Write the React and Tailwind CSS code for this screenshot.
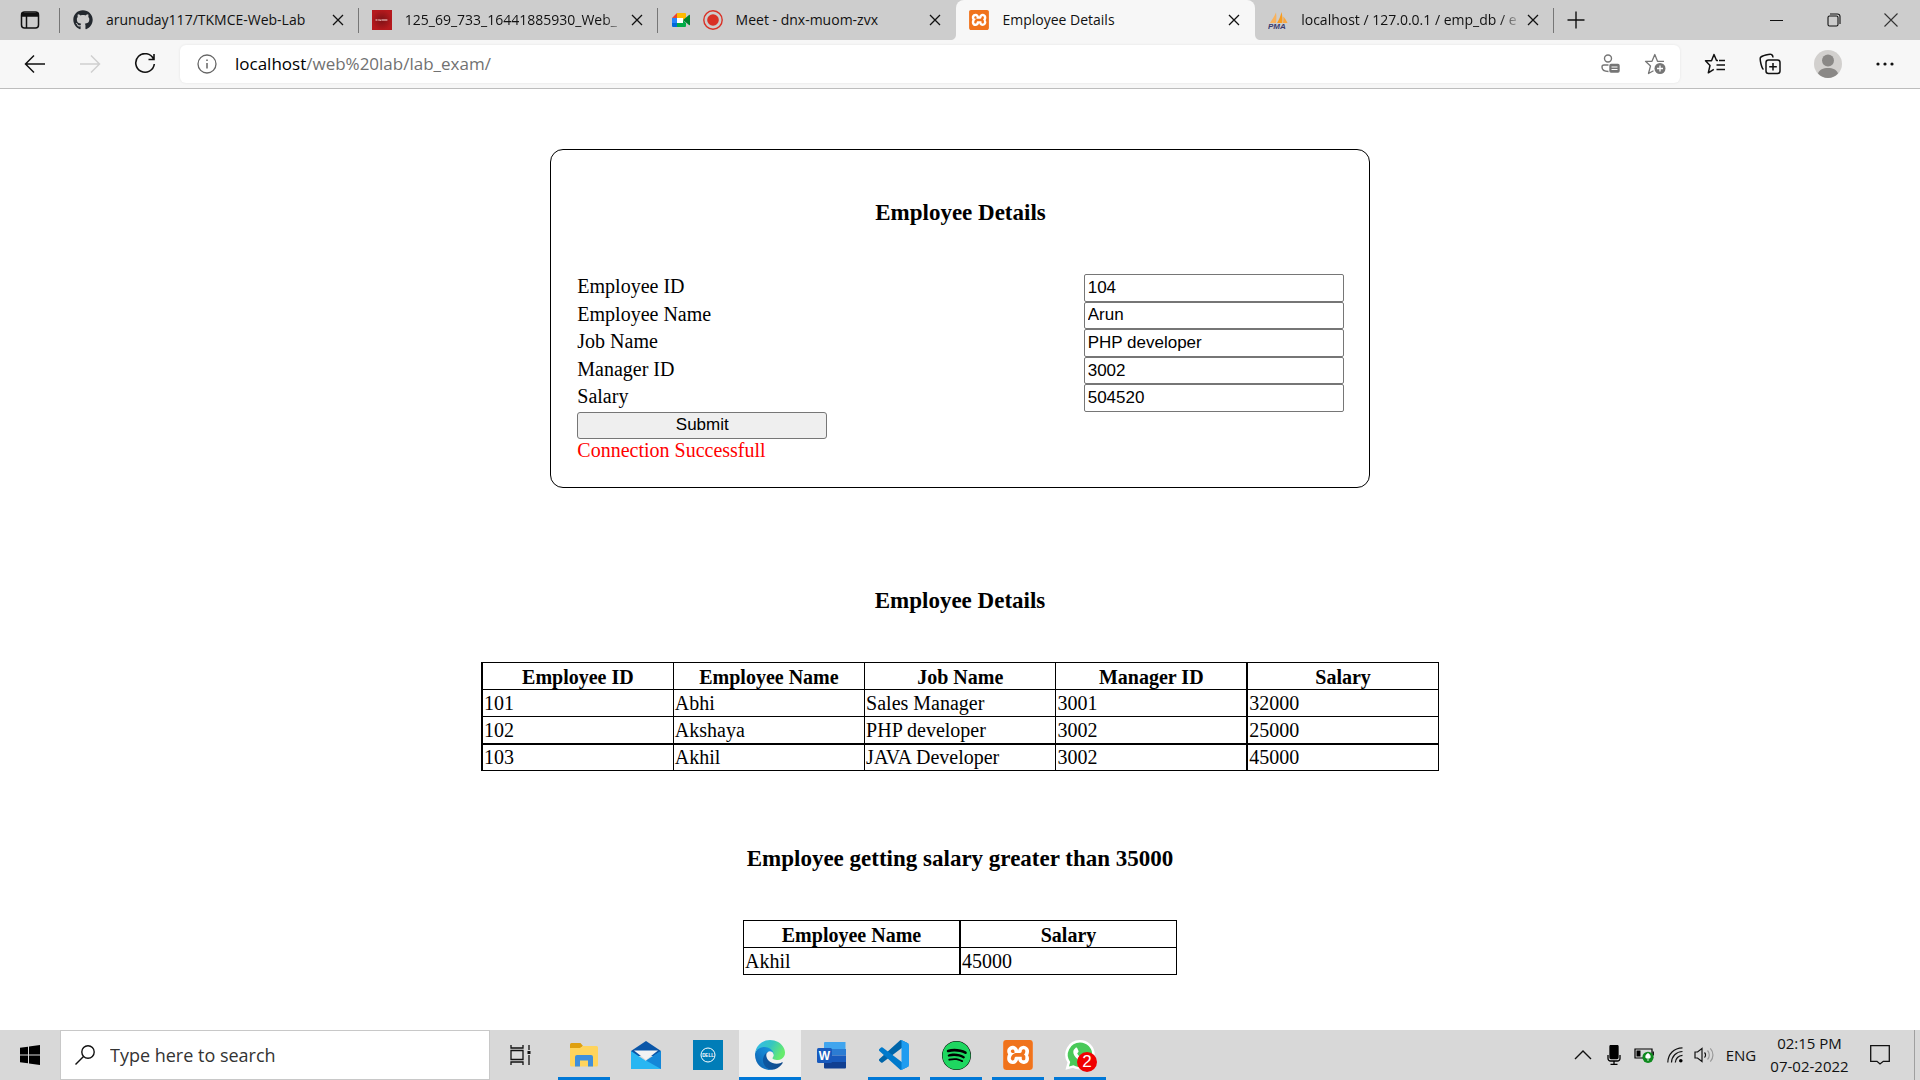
import React from "react";
import { FaGithub, FaSpotify } from "react-icons/fa";
import { SiXampp } from "react-icons/si";

const UI = "font-['Open_Sans',sans-serif]";

function XamppIcon({ className }) {
  return (
    <span className={"relative block shrink-0 rounded-[4px] bg-white " + className}>
      <SiXampp className="block size-full text-[#f0731c]" />
    </span>
  );
}

function MeetIcon() {
  return (
    <svg viewBox="0 0 20 20" className="size-5 shrink-0">
      <path d="M6 3v5H1z" fill="#ea4335" />
      <path d="M6 3h8a1 1 0 0 1 1 1v4l-3 2V8H6z" fill="#ffba00" />
      <path d="M1 8h5v5H1z" fill="#2684fc" />
      <path d="M1 13h5v4H2a1 1 0 0 1-1-1z" fill="#0066da" />
      <path d="M6 13h6v-3l3 3v3a1 1 0 0 1-1 1H6z" fill="#00ac47" />
      <path d="M6 8h6v5H6z" fill="#fff" />
      <path d="M12 10l6-5c.5-.4 1-.2 1 .5v9c0 .7-.5.9-1 .5z" fill="#00832d" />
    </svg>
  );
}

function RecordIcon() {
  return (
    <svg viewBox="0 0 20 20" className="size-5 shrink-0">
      <circle cx="10" cy="10" r="9.2" fill="none" stroke="#d93025" strokeWidth="1.4" />
      <circle cx="10" cy="10" r="5.8" fill="#d93025" />
    </svg>
  );
}

function PmaIcon() {
  return (
    <svg viewBox="0 0 20 20" className="size-5 shrink-0">
      <path d="M2 13C4 10 6.500 6 8 2.500c.6 3.500.5 7.500 0 10.500z" fill="#f9b25c" />
      <path d="M9 13c2-3 3.500-7 4.500-11 1 4 1.200 7.500.8 11z" fill="#f89c1e" />
      <path d="M15 13c.3-2 .5-4 .3-6.500 1.700 2 3.200 4 4.200 6.500z" fill="#f9a63e" />
      <text x="0" y="19" fontFamily="Liberation Sans" fontSize="8" fontWeight="700" fontStyle="italic" fill="#3b3b6d">PMA</text>
    </svg>
  );
}

function RedIcon() {
  return (
    <svg viewBox="0 0 20 20" className="size-5 shrink-0">
      <defs>
        <radialGradient id="redGlow"><stop offset="0" stopColor="#7d1216" /><stop offset="1" stopColor="#b5191d" /></radialGradient>
      </defs>
      <rect width="20" height="20" fill="url(#redGlow)" />
      <path d="M3.500 10h2m.7 0h1.500m.7-.500v1.500m1-1h6" stroke="#d99a9a" strokeWidth="1.300" />
    </svg>
  );
}

function CloseIcon() {
  return (
    <svg viewBox="0 0 12 12" className="size-3" fill="none" stroke="#111" strokeWidth="1.3">
      <path d="M1 1l10 10M11 1L1 11" />
    </svg>
  );
}

const tabs = [
  { title: "arunuday117/TKMCE-Web-Lab", icons: [<FaGithub key="g" className="size-5 shrink-0 text-[#24292f]" />] },
  { title: "125_69_733_16441885930_Web_", icons: [<RedIcon key="r" />], fade: true },
  { title: "Meet - dnx-muom-zvx", icons: [<MeetIcon key="m" />, <RecordIcon key="c" />] },
  { title: "Employee Details", icons: [<XamppIcon key="x" className="size-5" />], active: true },
  { title: "localhost / 127.0.0.1 / emp_db / e", icons: [<PmaIcon key="p" />], fade: true },
];

function Tab({ tab, divider }) {
  return (
    <div
      role="tab"
      aria-selected={!!tab.active}
      className={
        "relative flex h-10 min-w-0 flex-1 items-center gap-[13px] pl-[13px] pr-[15px] " +
        (tab.active ? "rounded-t-lg bg-[#f7f7f7]" : "")
      }
    >
      {divider && <span className="absolute right-0 top-2 h-[25px] w-px bg-[#767676]" />}
      {tab.active && (
        <>
          <svg viewBox="0 0 6 6" className="absolute -left-1.5 bottom-0 size-1.5"><path d="M6 0v6H0c4 0 6-2 6-6z" fill="#f7f7f7" /></svg>
          <svg viewBox="0 0 6 6" className="absolute -right-1.5 bottom-0 size-1.5"><path d="M0 0v6h6C2 6 0 4 0 0z" fill="#f7f7f7" /></svg>
        </>
      )}
      <span className="flex shrink-0 gap-3">{tab.icons}</span>
      <span
        className={
          "min-w-0 flex-1 overflow-hidden whitespace-nowrap text-[14px] leading-5 text-[#111] " +
          (tab.fade ? "-mr-2 [mask-image:linear-gradient(to_right,#000_90%,transparent)]" : "")
        }
      >
        {tab.title}
      </span>
      <button aria-label={"Close " + tab.title} className="shrink-0"><CloseIcon /></button>
    </div>
  );
}

function TabStrip() {
  return (
    <div className="flex h-10 items-center bg-[#cdcdcd]">
      <button aria-label="Tab actions" className="flex h-10 w-[60px] shrink-0 items-center justify-center">
        <svg viewBox="0 0 20 20" className="size-5" fill="none" stroke="#111" strokeWidth="1.5">
          <rect x="1.5" y="2" width="17" height="16" rx="3" />
          <path d="M2 3.5h16v2.5H2z" fill="#111" />
          <path d="M6.5 6v12" />
        </svg>
      </button>
      <span className="-ml-px h-[25px] w-px bg-[#767676]" />
      <div role="tablist" className="flex min-w-0 max-w-[1494px] flex-1">
        {tabs.map((t, i) => (
          <Tab key={t.title} tab={t} divider={i !== 2 && i !== 3} />
        ))}
      </div>
      <button aria-label="New tab" className="flex h-10 w-11 items-center justify-center">
        <svg viewBox="0 0 18 18" className="size-[18px]" fill="none" stroke="#111" strokeWidth="1.4"><path d="M9 .5v17M.5 9h17" /></svg>
      </button>
      <div className="ml-auto flex">
        <button aria-label="Minimize" className="flex h-10 w-[58px] items-center justify-center">
          <svg viewBox="0 0 14 14" className="size-3.5" stroke="#111" strokeWidth="1"><path d="M1 7.5h13" /></svg>
        </button>
        <button aria-label="Restore" className="flex h-10 w-[57px] items-center justify-center">
          <svg viewBox="0 0 14 14" className="size-3.5" fill="none" stroke="#111" strokeWidth="1.1">
            <rect x="1" y="3" width="10" height="10" rx="1.5" />
            <path d="M3 1h7.5A2.5 2.5 0 0 1 13 3.5V11" />
          </svg>
        </button>
        <button aria-label="Close window" className="flex h-10 w-[58px] items-center justify-center">
          <svg viewBox="0 0 14 14" className="size-3.5" fill="none" stroke="#333" strokeWidth="1.1"><path d="M.5 .5l13 13M13.5 .5l-13 13" /></svg>
        </button>
      </div>
    </div>
  );
}

function Toolbar() {
  return (
    <div className="flex h-[49px] items-center border-b border-[#bdbdbd] bg-[#f7f7f7]">
      <button aria-label="Back" className="ml-[7px] flex h-10 w-[55px] items-center justify-center">
        <svg viewBox="0 0 22 22" className="size-[22px]" fill="none" stroke="#111" strokeWidth="1.5"><path d="M21 11H2M10 2.500L1.500 11l8.500 8.500" /></svg>
      </button>
      <button aria-label="Forward" className="flex h-10 w-[55px] items-center justify-center">
        <svg viewBox="0 0 22 22" className="size-[22px]" fill="none" stroke="#cfcfcf" strokeWidth="1.5"><path d="M1 11h19M12 2.500l8.500 8.500-8.500 8.500" /></svg>
      </button>
      <button aria-label="Refresh" className="flex h-10 w-[55px] items-center justify-center">
        <svg viewBox="0 0 22 22" className="size-[22px]" fill="none" stroke="#111" strokeWidth="1.6">
          <path d="M19.500 6A9.300 9.300 0 1 0 20.300 11M20 1v5.500h-5.500" />
        </svg>
      </button>
      <div className="ml-2 flex h-[38px] min-w-0 flex-1 items-center rounded-md bg-white pl-[17px] pr-3.5 shadow-[0_0_3px_rgba(0,0,0,0.08)]">
        <svg viewBox="0 0 20 20" className="size-5 shrink-0" fill="none" stroke="#666" strokeWidth="1.3">
          <circle cx="10" cy="10" r="9" />
          <path d="M10 9v5.500M10 5.500v1.600" strokeWidth="1.5" />
        </svg>
        <a href="#" className="ml-[18px] flex-1 whitespace-nowrap text-[17px] leading-6 text-[#717171]">
          <span className="text-black">localhost</span>/web%20lab/lab_exam/
        </a>
        <button aria-label="Sign-in info" className="mr-6">
          <svg viewBox="0 0 20 20" className="size-5" fill="none" stroke="#767676" strokeWidth="1.4">
            <circle cx="8" cy="4.500" r="3.500" />
            <path d="M8.500 11H4a2 2 0 0 0-2 2c0 3 2 4.500 6.500 4.500" />
            <rect x="10" y="10.500" width="9" height="7.500" rx="1" fill="#767676" />
            <path d="M11.500 13h6M11.500 15.500h6" stroke="#fff" strokeWidth="1" />
          </svg>
        </button>
        <button aria-label="Add to favorites">
          <svg viewBox="0 0 22 22" className="size-[22px]" fill="none" stroke="#767676" strokeWidth="1.3" strokeLinejoin="round">
            <path d="M20 8.300h-6.500L10.800 1.500 8 8.300H1.500l5 4.700-2 7.500 5-2.700" />
            <circle cx="16" cy="15.500" r="5.500" fill="#767676" stroke="none" />
            <path d="M16 12.500v6M13 15.500h6" stroke="#fff" />
          </svg>
        </button>
      </div>
      <div className="flex items-center">
        <button aria-label="Favorites" className="ml-[7px] flex w-[55px] justify-center">
          <svg viewBox="0 0 22 22" className="size-[22px]" fill="none" stroke="#111" strokeWidth="1.500" strokeLinejoin="round">
            <path d="M14 7.500h-1.500L10 1.500 7.500 7.800H1.500L6 12.500 4.300 19.800l5.500-3.500" />
            <path d="M15 7.500h6M12.500 12H21M12.500 16.500H21" />
          </svg>
        </button>
        <button aria-label="Collections" className="flex w-[55px] justify-center">
          <svg viewBox="0 0 22 22" className="size-[22px]" fill="none" stroke="#111" strokeWidth="1.500">
            <rect x="7" y="7" width="14" height="13.500" rx="2.500" />
            <path d="M14 10v7.500M10.200 13.800h7.600M4.500 16.500C2.500 15 .500 6 1.500 4.500S11 .500 12.500 1.500c.8.500 1.500 2 1.500 3" />
          </svg>
        </button>
        <button aria-label="Profile" className="flex w-[58px] justify-center pl-1">
          <svg viewBox="0 0 28 28" className="size-7">
            <circle cx="14" cy="14" r="14" fill="#d2d0ce" />
            <circle cx="14" cy="10.500" r="6" fill="#8a8886" />
            <path d="M4 23.500C5.500 19.500 9 18 14 18s8.500 1.500 10 5.500A14 14 0 0 1 14 28 14 14 0 0 1 4 23.500z" fill="#8a8886" />
          </svg>
        </button>
        <button aria-label="Settings and more" className="mr-[7px] flex w-[58px] justify-center pl-0.5">
          <svg viewBox="0 0 18 4" className="h-1 w-[18px]" fill="#111"><circle cx="2" cy="2" r="1.600" /><circle cx="9" cy="2" r="1.600" /><circle cx="16" cy="2" r="1.600" /></svg>
        </button>
      </div>
    </div>
  );
}

const fields = [
  ["Employee ID", "104"],
  ["Employee Name", "Arun"],
  ["Job Name", "PHP developer"],
  ["Manager ID", "3002"],
  ["Salary", "504520"],
];

const employees = [
  ["101", "Abhi", "Sales Manager", "3001", "32000"],
  ["102", "Akshaya", "PHP developer", "3002", "25000"],
  ["103", "Akhil", "JAVA Developer", "3002", "45000"],
];

const heading = "mb-[47px] text-center text-[23px] font-bold leading-7";

function Page() {
  return (
    <main className="flex min-h-0 flex-1 flex-col items-center overflow-hidden bg-white px-0.5 font-['Liberation_Serif',serif] text-[20px] leading-[23px] text-black">
      <form onSubmit={(e) => e.preventDefault()} className="mt-[60px] box-content w-2/5 rounded-[13px] border border-black py-[25px] pl-[26px] pr-[25px]">
        <h3 className={heading + " mt-6"}>Employee Details</h3>
        <div className="grid h-[138px] grid-rows-5">
          {fields.map(([label, value]) => {
            const id = label.toLowerCase().replace(" ", "-");
            return (
              <div key={id} className="flex items-stretch justify-between">
                <label htmlFor={id} className="pt-px">{label}</label>
                <input
                  id={id}
                  defaultValue={value}
                  className="w-[260px] rounded-[2px] border border-[#767676] bg-white px-[3px] font-['Liberation_Sans',sans-serif] text-[17px] leading-5"
                />
              </div>
            );
          })}
        </div>
        <button className="block h-[27px] w-[250px] rounded-[3px] border border-[#767676] bg-[#efefef] pb-0.5 font-['Liberation_Sans',sans-serif] text-[17px] leading-5">
          Submit
        </button>
        <p className="text-[#ff0000]">Connection Successfull</p>
      </form>

      <h3 className={heading + " mt-[99px]"}>Employee Details</h3>
      <table className="h-[108px] w-1/2 table-fixed border-collapse leading-[22px]">
        <thead>
          <tr className="h-[27px]">
            {fields.map(([label], i) => (
              <th key={label} className={"border border-black p-px pt-0.5 " + (i === 0 || i === 4 ? "border-l-2" : "")}>{label}</th>
            ))}
          </tr>
        </thead>
        <tbody>
          {employees.map((row, r) => (
            <tr key={row[0]} className="h-[27px]">
              {row.map((cell, i) => (
                <td
                  key={i}
                  className={"border border-black p-px " + (i === 0 || i === 4 ? "border-l-2 " : "") + (r === 2 ? "border-t-2" : "")}
                >
                  {cell}
                </td>
              ))}
            </tr>
          ))}
        </tbody>
      </table>

      <h3 className={heading + " mt-[74px]"}>Employee getting salary greater than 35000</h3>
      <table className="h-[55px] w-[434px] table-fixed border-collapse leading-[22px]">
        <thead>
          <tr className="h-[27px]">
            <th className="border border-black p-px pt-0.5">Employee Name</th>
            <th className="border border-l-2 border-black p-px pt-0.5">Salary</th>
          </tr>
        </thead>
        <tbody>
          <tr className="h-[27px]">
            <td className="border border-black p-px">Akhil</td>
            <td className="border border-l-2 border-black p-px">45000</td>
          </tr>
        </tbody>
      </table>
    </main>
  );
}

function ExplorerIcon() {
  return (
    <svg viewBox="0 0 30 30" className="size-[30px]">
      <path d="M1 4.500a1.500 1.500 0 0 1 1.500-1.500h9L14 6l-2.500 2H1z" fill="#dfa010" />
      <path d="M1 8h10l3-2h13.500A1.500 1.500 0 0 1 29 7.500V25a1.500 1.500 0 0 1-1.500 1.500h-25A1.500 1.500 0 0 1 1 25z" fill="#ffd45c" />
      <path d="M6 26.500V17a2 2 0 0 1 2-2h14a2 2 0 0 1 2 2v9.500h-5V20.500h-8v6z" fill="#3f8fdb" />
    </svg>
  );
}

function MailIcon() {
  return (
    <svg viewBox="0 0 30 30" className="size-[30px]">
      <path d="M0 11L15 1l15 10v5H0z" fill="#0a56a8" />
      <path d="M0 11l15 10L30 11v18H0z" fill="#29b6f2" />
      <path d="M30 11v18L15 20.500z" fill="#1487d8" />
      <path d="M3 10.500h24L15 20z" fill="#f3f3f3" />
    </svg>
  );
}

function DellIcon() {
  return (
    <svg viewBox="0 0 30 30" className="size-[30px]">
      <rect width="30" height="30" fill="#007db8" />
      <circle cx="15" cy="15" r="7" fill="none" stroke="#fff" strokeWidth="1" />
      <text x="15" y="16.700" textAnchor="middle" fontFamily="Liberation Sans" fontSize="4.500" fontWeight="700" fill="#fff">DELL</text>
    </svg>
  );
}

function EdgeIcon() {
  return (
    <svg viewBox="0 0 256 256" className="size-[30px]">
      <defs>
        <linearGradient id="edgeA" x1="0" x2="1"><stop offset="0" stopColor="#0c59a4" /><stop offset="1" stopColor="#114a8b" /></linearGradient>
        <linearGradient id="edgeB" x1="1" y1="0" x2="0" y2="1"><stop offset="0" stopColor="#1b9de2" /><stop offset="0.500" stopColor="#1480ce" /><stop offset="1" stopColor="#0d5aa7" /></linearGradient>
        <linearGradient id="edgeC" x1="0" y1="0" x2="1" y2="0.400"><stop offset="0" stopColor="#35b9f1" /><stop offset="0.550" stopColor="#36c6c0" /><stop offset="1" stopColor="#66eb6e" /></linearGradient>
      </defs>
      <path d="M231 190.500c-3.400 1.800-6.900 3.400-10.500 4.700a101.900 101.900 0 0 1-35.900 6.500c-47.300 0-88.500-32.500-88.500-74.300a31.500 31.500 0 0 1 16.400-27.300c-42.800 1.800-53.800 46.400-53.800 72.500 0 73.900 68.100 81.400 82.800 81.400 7.900 0 19.800-2.300 27-4.600l1.300-.4a128.300 128.300 0 0 0 66.600-52.800 4 4 0 0 0-5.400-5.700z" fill="url(#edgeA)" />
      <path d="M105.700 241.400a79.200 79.200 0 0 1-22.700-21.300 80.700 80.700 0 0 1 29.500-120c3.200-1.500 8.500-4.100 15.600-4a32.400 32.400 0 0 1 25.700 13 31.900 31.900 0 0 1 6.300 18.700c0-.2 24.500-79.600-80-79.600-43.900 0-80 41.700-80 78.200a130.200 130.200 0 0 0 12.100 56 128 128 0 0 0 156.400 67 75.600 75.600 0 0 1-62.800-8z" fill="url(#edgeB)" />
      <path d="M152.300 148.900c-.9 1-3.400 2.500-3.400 5.600 0 2.600 1.700 5.200 4.800 7.300 14.300 10 41.400 8.600 41.500 8.600a59.600 59.600 0 0 0 30.300-8.300A61.400 61.400 0 0 0 256 109.200c.3-22.400-8-37.300-11.300-43.900C223.500 23.900 177.700 0 128 0A128 128 0 0 0 0 126.200c.5-36.500 36.800-66 80-66 3.500 0 23.500.3 42 10.100 16.300 8.500 24.900 18.900 30.800 29.200 6.200 10.700 7.300 24.100 7.300 29.500 0 5.300-2.700 13.300-7.800 19.900z" fill="url(#edgeC)" />
    </svg>
  );
}

function WordIcon() {
  return (
    <svg viewBox="0 0 30 30" className="size-[30px]">
      <path d="M8 2h20.500v7H7V3a1 1 0 0 1 1-1z" fill="#41a5ee" />
      <path d="M7 9h22v6.500H7z" fill="#2b7cd3" />
      <path d="M7 15.500h22V22H7z" fill="#185abd" />
      <path d="M7 22h22v5.500a1 1 0 0 1-1 1H8a1 1 0 0 1-1-1z" fill="#103f91" />
      <rect x="0" y="8" width="15" height="15" rx="1.500" fill="#185abd" />
      <text x="7.500" y="20" textAnchor="middle" fontFamily="Liberation Sans" fontSize="12" fontWeight="700" fill="#fff">W</text>
    </svg>
  );
}

function CodeIcon() {
  return (
    <svg viewBox="0 0 100 100" className="size-[30px]">
      <path d="M96.500 10.800L75.900.900a6.200 6.200 0 0 0-7.100 1.200L1.300 63.600a4.200 4.200 0 0 0 0 6.200l5.500 5a4.200 4.200 0 0 0 5.300.200L93.400 13.400c2.700-2.100 6.600-.1 6.600 3.300v-.2a6.200 6.200 0 0 0-3.500-5.700z" fill="#0065a9" />
      <path d="M96.500 89.200l-20.600 9.900a6.200 6.200 0 0 1-7.100-1.200L1.300 36.400a4.200 4.200 0 0 1 0-6.200l5.500-5a4.200 4.200 0 0 1 5.300-.200l81.300 61.600c2.700 2.100 6.600.1 6.600-3.300v.2a6.200 6.200 0 0 1-3.500 5.700z" fill="#007acc" />
      <path d="M75.900 99.100a6.200 6.200 0 0 1-7.100-1.200c2.300 2.300 6.200.700 6.200-2.600V4.700c0-3.300-3.900-4.900-6.200-2.600A6.200 6.200 0 0 1 75.900.900l20.600 9.900a6.200 6.200 0 0 1 3.500 5.600v67.200a6.200 6.200 0 0 1-3.500 5.600z" fill="#1f9cf0" />
    </svg>
  );
}

function SpotifyIcon() {
  return (
    <span className="block rounded-full bg-black p-px">
      <FaSpotify className="-m-px size-[29px] text-[#1ed760]" />
    </span>
  );
}

function WhatsAppIcon() {
  return (
    <span className="relative block">
      <svg viewBox="0 0 30 30" className="size-[30px]">
        <path d="M15 0a14.500 14.500 0 0 1 0 29.500c-2.500 0-5-.600-7-1.700L.500 29.700l2-7.300A14.600 14.600 0 0 1 15 0z" fill="#fff" />
        <path d="M15 2.500a12.200 12.200 0 0 1 0 24.500c-2.300 0-4.500-.600-6.400-1.800L4 26.400l1.200-4.500A12.200 12.200 0 0 1 15 2.500z" fill="#4ac959" />
        <path d="M10.500 8c.6-.6 1.500-.5 1.800.2l1.200 2.700c.2.500 0 1-1.300 2.500 1.200 2.200 2.800 3.600 5 4.500 1.300-1.700 1.700-2 2.300-1.700l2.700 1.300c.7.300.6 3-1.700 4-2 .8-5 .2-8.200-2.600-2.500-2.200-4-4.800-4-7 0-1.700.8-2.700 2.200-3.900z" fill="#fff" />
      </svg>
      <span className="absolute -bottom-0.5 -right-0.5 flex size-5 items-center justify-center rounded-full bg-[#f00000] font-['Liberation_Sans',sans-serif] text-[17px] leading-5 text-white">2</span>
    </span>
  );
}

const apps = [
  { name: "File Explorer", icon: <ExplorerIcon />, open: true },
  { name: "Mail", icon: <MailIcon /> },
  { name: "Dell", icon: <DellIcon /> },
  { name: "Microsoft Edge", icon: <EdgeIcon />, active: true },
  { name: "Word", icon: <WordIcon /> },
  { name: "Visual Studio Code", icon: <CodeIcon />, open: true },
  { name: "Spotify", icon: <SpotifyIcon />, open: true },
  { name: "XAMPP", icon: <XamppIcon className="size-[30px]" />, open: true },
  { name: "WhatsApp", icon: <WhatsAppIcon />, open: true },
];

function Taskbar() {
  return (
    <footer className="flex h-[50px] shrink-0 bg-[#d8d8d8]">
      <button aria-label="Start" className="flex w-[60px] items-center justify-center">
        <svg viewBox="0 0 20 20" className="size-5" fill="#000"><path d="M0 2.800l8-1.100v7.800H0zM9 1.500L20 0v9.500H9zM0 10.500h8v7.800l-8-1.100zM9 10.500h11V20L9 18.500z" /></svg>
      </button>
      <label className="flex w-[430px] items-center border border-[#c8c8c8] bg-white pl-3.5">
        <svg viewBox="0 0 20 20" className="size-5 shrink-0" fill="none" stroke="#111" strokeWidth="1.400"><circle cx="13" cy="7" r="6.200" /><path d="M8.500 11.500L.500 19.500" /></svg>
        <input aria-label="Search" placeholder="Type here to search" className="ml-[15px] min-w-0 flex-1 text-[18px] leading-6 outline-none placeholder:text-[#333]" />
      </label>
      <button aria-label="Task View" className="flex w-[61px] items-center justify-center">
        <svg viewBox="0 0 22 20" className="h-5 w-[22px]" fill="none" stroke="#111" strokeWidth="1.300">
          <path d="M1 0v3h12V0M1 20v-3h12v3M1 5.500h12v9H1zM19 0v5M19 10v10" />
          <path d="M17.500 6h3v3h-3z" fill="#111" stroke="none" />
        </svg>
      </button>
      <nav className="ml-0.5 flex">
        {apps.map((a) => (
          <button
            key={a.name}
            aria-label={a.name}
            className={"relative flex w-[62px] items-center justify-center " + (a.active ? "bg-[#f0f0f0]" : "")}
          >
            {a.icon}
            {a.open && <span className="absolute inset-x-[5px] bottom-0 h-[3px] bg-[#0078d7]" />}
            {a.active && <span className="absolute inset-x-0 bottom-0 h-[3px] bg-[#0078d7]" />}
          </button>
        ))}
      </nav>
      <div className="ml-auto flex items-center">
        <button aria-label="Show hidden icons" className="flex w-8 justify-center">
          <svg viewBox="0 0 18 10" className="h-2.5 w-[18px]" fill="none" stroke="#111" strokeWidth="1.400"><path d="M1 9l8-8 8 8" /></svg>
        </button>
        <button aria-label="Microphone" className="flex w-[29px] justify-center">
          <svg viewBox="0 0 14 20" className="h-5 w-3.5" fill="none" stroke="#000" strokeWidth="1.300"><rect x="3" y="0.500" width="8" height="13" rx="1" fill="#000" /><path d="M1 10v3.500a2.500 2.500 0 0 0 2.500 2.500h7a2.500 2.500 0 0 0 2.500-2.500V10M7 16v3M3.500 19.300h7" /></svg>
        </button>
        <button aria-label="Battery" className="flex w-8 justify-center">
          <svg viewBox="0 0 20 16" className="h-4 w-5" fill="none" stroke="#000" strokeWidth="1.200">
            <path d="M1 2h17v9H1z" /><path d="M2.500 3.500h4v6h-4z" fill="#000" stroke="none" /><path d="M19.300 4.500v4" />
            <circle cx="14" cy="10.300" r="5.600" fill="#0f8a1f" stroke="none" />
            <path d="M14 6.500c2 1 2.700 2.500 2 4.500h-4c-.7-2 0-3.500 2-4.500zM14 10v4" fill="#fff" stroke="#fff" strokeWidth="0.800" />
          </svg>
        </button>
        <button aria-label="Wi-Fi" className="flex w-[29px] justify-center">
          <svg viewBox="0 0 16 16" className="size-4" fill="none" stroke="#111" strokeWidth="1.200">
            <path d="M.800 15.500C1 7 7 1 15.500.800M4.500 15.500c.2-6.300 4.700-10.800 11-11M8.300 15.500c.2-4 3.200-7 7.200-7.200" />
            <circle cx="13.800" cy="13.800" r="1.800" fill="#000" stroke="none" />
          </svg>
        </button>
        <button aria-label="Volume" className="flex w-[29px] justify-center">
          <svg viewBox="0 0 20 16" className="h-4 w-5" fill="none" stroke="#111" strokeWidth="1.200">
            <path d="M1 5h2.500L8 1.500v13L3.500 11H1z" /><path d="M10.500 5.500a3.500 3.500 0 0 1 0 5" /><path d="M13.500 3.500a6.500 6.500 0 0 1 0 9M16.300 1.300a9.800 9.800 0 0 1 0 13.400" stroke="#999" />
          </svg>
        </button>
        <button className="w-[46px] text-center text-[15px] leading-5 text-[#111]">ENG</button>
        <button className="w-[91px] whitespace-nowrap text-center text-[15px] leading-[23px] text-[#111]">
          <time className="block">02:15 PM</time>
          <time className="block">07-02-2022</time>
        </button>
        <button aria-label="Notifications" className="ml-1 flex w-[41px] justify-center">
          <svg viewBox="0 0 20 20" className="size-5" fill="none" stroke="#111" strokeWidth="1.300"><path d="M.700 .700h18.600v15.600h-6L10 19l-3-2.700H.700z" /></svg>
        </button>
        <span className="ml-3.5 mr-[5px] h-[50px] w-px bg-[#9f9f9f]" />
      </div>
    </footer>
  );
}

export default function App() {
  return (
    <div className={"flex h-screen flex-col overflow-hidden bg-white " + UI}>
      <header className="shrink-0">
        <TabStrip />
        <Toolbar />
      </header>
      <Page />
      <Taskbar />
    </div>
  );
}
